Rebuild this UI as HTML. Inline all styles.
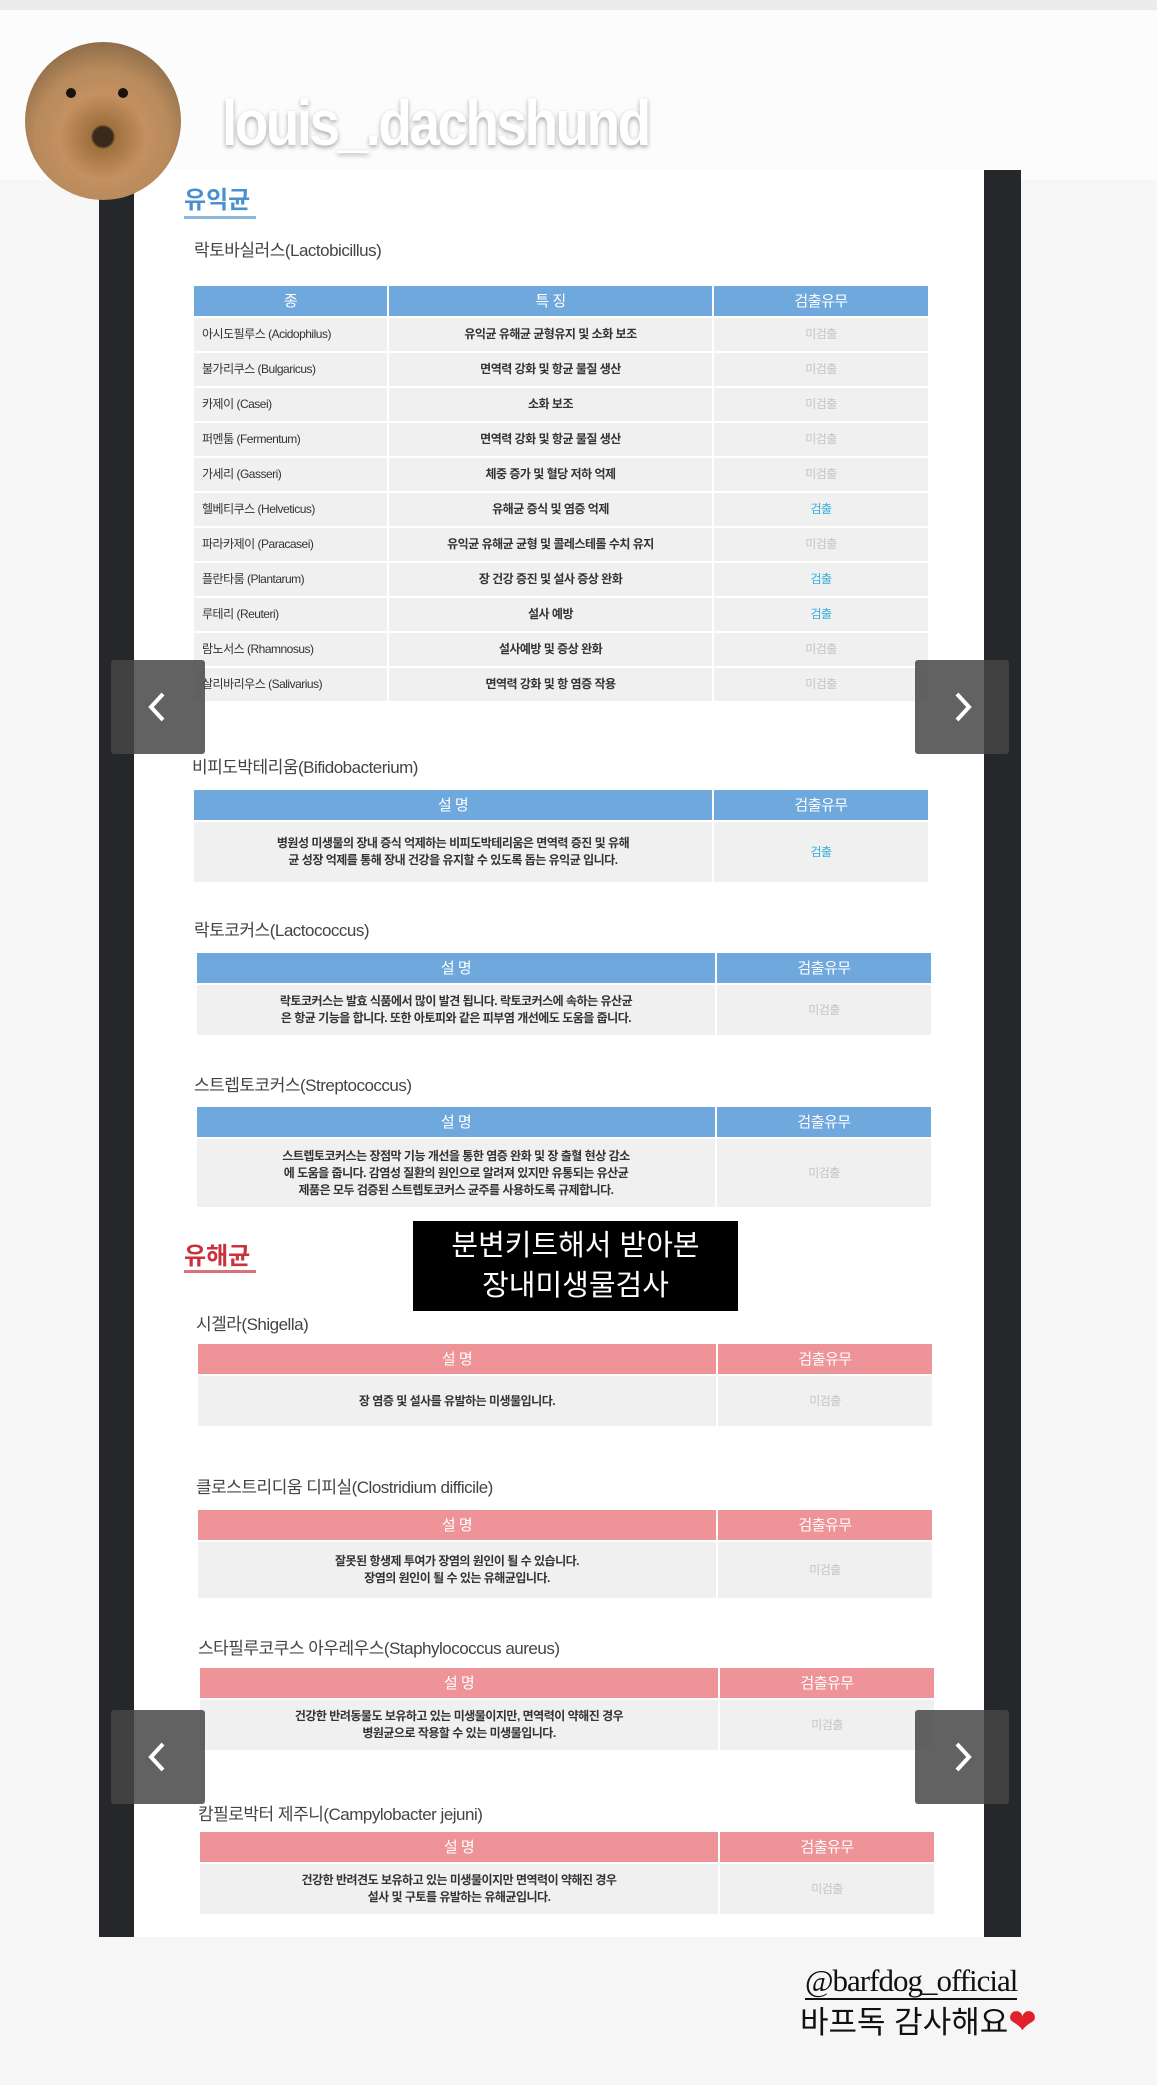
<!DOCTYPE html>
<html><head><meta charset="utf-8"><style>
*{margin:0;padding:0;box-sizing:border-box}
body{width:1157px;height:2085px;background:#f6f6f6;position:relative;overflow:hidden;font-family:"Liberation Sans","Noto Sans CJK KR",sans-serif;color:#333}
.a{position:absolute}
.top{left:0;top:0;width:1157px;height:10px;background:#ececec}
.topbg{left:0;top:10px;width:1157px;height:170px;background:#fcfcfc}
.dark{background:#26272b}
.white{background:#fff}
.h{font-weight:bold;font-size:24px}
.t{font-size:17px;color:#444;letter-spacing:-0.5px}
table{position:absolute;border-collapse:collapse;table-layout:fixed}
td,th{border:2px solid #fff;text-align:center;font-size:12px;font-weight:bold;color:#333;letter-spacing:-0.5px;line-height:17px}
th{color:#fff;font-weight:normal;font-size:15px;background:#6fa8dc}
.p th{background:#ee9499}
td{background:#f0f0f0}
td.l{text-align:left;padding-left:8px;font-weight:normal}
.n{color:#c4c4c4!important;font-weight:normal!important}
.y{color:#35aee0!important;font-weight:normal!important}
.nav{width:94px;height:94px;background:rgba(70,70,70,.85);border-radius:3px}
.nav svg{position:absolute;left:30px;top:30px}
</style></head><body>
<div class="a top"></div>
<div class="a topbg"></div>
<div class="a dark" style="left:99px;top:170px;width:922px;height:1767px"></div>
<div class="a white" style="left:134px;top:170px;width:850px;height:1767px"></div>

<div class="a" style="left:25px;top:42px;width:156px;height:158px;border-radius:50%;background:radial-gradient(circle at 50% 60%,#3a2a1c 0 8%,#a0703e 10%,#c49060 35%,#b88a5c 55%,#8a6a48 80%,#5c4632 100%)"></div>
<div class="a" style="left:66px;top:88px;width:10px;height:10px;border-radius:50%;background:#1a120c"></div>
<div class="a" style="left:118px;top:88px;width:10px;height:10px;border-radius:50%;background:#1a120c"></div>
<div class="a" style="left:222px;top:88px;font-size:64px;font-weight:bold;color:#fff;text-shadow:0 2px 5px rgba(0,0,0,.35);letter-spacing:-3px;transform:scaleX(.86);transform-origin:left;line-height:70px">louis_.dachshund</div>

<div class="a h" style="left:184px;top:180px;color:#4a8fd0">유익균</div>
<div class="a" style="left:184px;top:216px;width:72px;height:3px;background:#8cb8e0"></div>
<div class="a t" style="left:194px;top:236px">락토바실러스(Lactobicillus)</div>
<table style="left:192px;top:284px;width:738px">
<colgroup><col style="width:195px"><col style="width:325px"><col></colgroup>
<tr style="height:32px"><th>종</th><th>특 징</th><th>검출유무</th></tr>
<tr style="height:35px"><td class="l">아시도필루스 (Acidophilus)</td><td>유익균 유해균 균형유지 및 소화 보조</td><td class="n">미검출</td></tr>
<tr style="height:35px"><td class="l">불가리쿠스 (Bulgaricus)</td><td>면역력 강화 및 항균 물질 생산</td><td class="n">미검출</td></tr>
<tr style="height:35px"><td class="l">카제이 (Casei)</td><td>소화 보조</td><td class="n">미검출</td></tr>
<tr style="height:35px"><td class="l">퍼멘툼 (Fermentum)</td><td>면역력 강화 및 항균 물질 생산</td><td class="n">미검출</td></tr>
<tr style="height:35px"><td class="l">가세리 (Gasseri)</td><td>체중 증가 및 혈당 저하 억제</td><td class="n">미검출</td></tr>
<tr style="height:35px"><td class="l">헬베티쿠스 (Helveticus)</td><td>유해균 증식 및 염증 억제</td><td class="y">검출</td></tr>
<tr style="height:35px"><td class="l">파라카제이 (Paracasei)</td><td>유익균 유해균 균형 및 콜레스테롤 수치 유지</td><td class="n">미검출</td></tr>
<tr style="height:35px"><td class="l">플란타룸 (Plantarum)</td><td>장 건강 증진 및 설사 증상 완화</td><td class="y">검출</td></tr>
<tr style="height:35px"><td class="l">루테리 (Reuteri)</td><td>설사 예방</td><td class="y">검출</td></tr>
<tr style="height:35px"><td class="l">람노서스 (Rhamnosus)</td><td>설사예방 및 증상 완화</td><td class="n">미검출</td></tr>
<tr style="height:35px"><td class="l">살리바리우스 (Salivarius)</td><td>면역력 강화 및 항 염증 작용</td><td class="n">미검출</td></tr>
</table>

<div class="a t" style="left:192px;top:753px">비피도박테리움(Bifidobacterium)</div>
<table style="left:192px;top:788px;width:738px"><colgroup><col style="width:520px"><col></colgroup>
<tr style="height:32px"><th>설 명</th><th>검출유무</th></tr>
<tr style="height:62px"><td>병원성 미생물의 장내 증식 억제하는 비피도박테리움은 면역력 증진 및 유해<br>균 성장 억제를 통해 장내 건강을 유지할 수 있도록 돕는 유익균 입니다.</td><td class="y">검출</td></tr></table>

<div class="a t" style="left:194px;top:916px">락토코커스(Lactococcus)</div>
<table style="left:195px;top:951px;width:738px"><colgroup><col style="width:520px"><col></colgroup>
<tr style="height:32px"><th>설 명</th><th>검출유무</th></tr>
<tr style="height:52px"><td>락토코커스는 발효 식품에서 많이 발견 됩니다. 락토코커스에 속하는 유산균<br>은 항균 기능을 합니다. 또한 아토피와 같은 피부염 개선에도 도움을 줍니다.</td><td class="n">미검출</td></tr></table>

<div class="a t" style="left:194px;top:1071px">스트렙토코커스(Streptococcus)</div>
<table style="left:195px;top:1105px;width:738px"><colgroup><col style="width:520px"><col></colgroup>
<tr style="height:32px"><th>설 명</th><th>검출유무</th></tr>
<tr style="height:70px"><td>스트렙토코커스는 장점막 기능 개선을 통한 염증 완화 및 장 출혈 현상 감소<br>에 도움을 줍니다. 감염성 질환의 원인으로 알려져 있지만 유통되는 유산균<br>제품은 모두 검증된 스트렙토코커스 균주를 사용하도록 규제합니다.</td><td class="n">미검출</td></tr></table>

<div class="a h" style="left:184px;top:1236px;color:#c8323c">유해균</div>
<div class="a" style="left:184px;top:1270px;width:72px;height:3px;background:#d9737a"></div>
<div class="a" style="left:413px;top:1221px;width:325px;height:90px;background:#000;color:#fff;font-size:29px;line-height:40px;text-align:center;padding-top:5px">분변키트해서 받아본<br>장내미생물검사</div>

<div class="a t" style="left:196px;top:1310px">시겔라(Shigella)</div>
<table class="p" style="left:196px;top:1342px;width:738px"><colgroup><col style="width:520px"><col></colgroup>
<tr style="height:32px"><th>설 명</th><th>검출유무</th></tr>
<tr style="height:52px"><td>장 염증 및 설사를 유발하는 미생물입니다.</td><td class="n">미검출</td></tr></table>

<div class="a t" style="left:196px;top:1473px">클로스트리디움 디피실(Clostridium difficile)</div>
<table class="p" style="left:196px;top:1508px;width:738px"><colgroup><col style="width:520px"><col></colgroup>
<tr style="height:32px"><th>설 명</th><th>검출유무</th></tr>
<tr style="height:58px"><td>잘못된 항생제 투여가 장염의 원인이 될 수 있습니다.<br>장염의 원인이 될 수 있는 유해균입니다.</td><td class="n">미검출</td></tr></table>

<div class="a t" style="left:198px;top:1634px">스타필루코쿠스 아우레우스(Staphylococcus aureus)</div>
<table class="p" style="left:198px;top:1666px;width:738px"><colgroup><col style="width:520px"><col></colgroup>
<tr style="height:32px"><th>설 명</th><th>검출유무</th></tr>
<tr style="height:52px"><td>건강한 반려동물도 보유하고 있는 미생물이지만, 면역력이 약해진 경우<br>병원균으로 작용할 수 있는 미생물입니다.</td><td class="n">미검출</td></tr></table>

<div class="a t" style="left:198px;top:1800px">캄필로박터 제주니(Campylobacter jejuni)</div>
<table class="p" style="left:198px;top:1830px;width:738px"><colgroup><col style="width:520px"><col></colgroup>
<tr style="height:32px"><th>설 명</th><th>검출유무</th></tr>
<tr style="height:52px"><td>건강한 반려견도 보유하고 있는 미생물이지만 면역력이 약해진 경우<br>설사 및 구토를 유발하는 유해균입니다.</td><td class="n">미검출</td></tr></table>

<div class="a nav" style="left:111px;top:660px"><svg width="34" height="34" viewBox="0 0 34 34"><path d="M22 4 L10 17 L22 30" stroke="#fff" stroke-width="4" fill="none"/></svg></div>
<div class="a nav" style="left:915px;top:660px"><svg width="34" height="34" viewBox="0 0 34 34"><path d="M12 4 L24 17 L12 30" stroke="#fff" stroke-width="4" fill="none"/></svg></div>
<div class="a nav" style="left:111px;top:1710px"><svg width="34" height="34" viewBox="0 0 34 34"><path d="M22 4 L10 17 L22 30" stroke="#fff" stroke-width="4" fill="none"/></svg></div>
<div class="a nav" style="left:915px;top:1710px"><svg width="34" height="34" viewBox="0 0 34 34"><path d="M12 4 L24 17 L12 30" stroke="#fff" stroke-width="4" fill="none"/></svg></div>

<div class="a" style="left:805px;top:1964px;font-family:'Liberation Serif',serif;font-size:31px;color:#111;letter-spacing:-1px;border-bottom:2px solid #111;line-height:34px">@barfdog_official</div>
<div class="a" style="left:800px;top:2002px;font-size:31px;color:#111;line-height:40px">바프독 감사해요<span style="color:#e0202a;font-size:34px">❤</span></div>
</body></html>
